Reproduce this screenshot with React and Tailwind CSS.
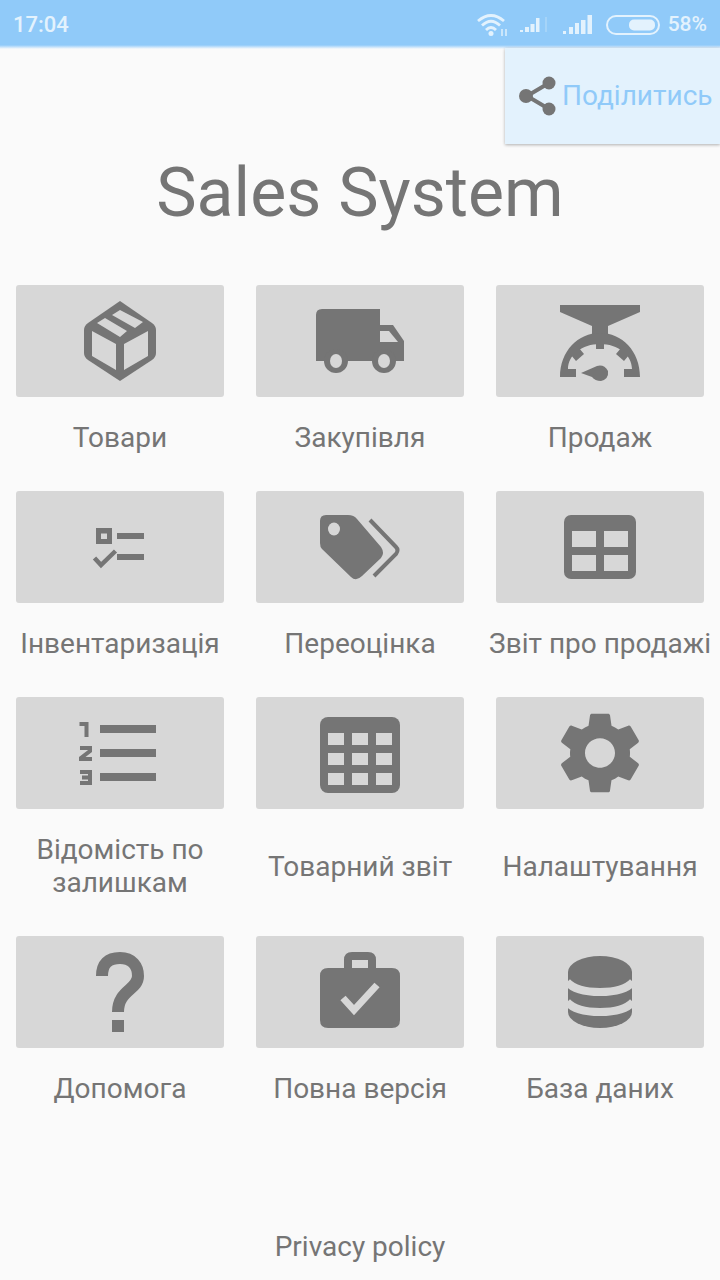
import React from "react";

const GRAY = "#757575";
const TILE = "#d7d7d7";

// all tile icons are drawn in tile coordinates (208 x 112)
function BoxIcon() {
	return (
		<>
			<path d="M104 16 L136 38 Q140 41 140 45 V68 Q140 72 136 75 L104 96 L72 75 Q68 72 68 68 V45 Q68 41 72 38 Z" fill={GRAY} />
			<path d="M76 46 L100 59 V85 L76 71 Z M132 46 L108 59 V85 L132 71 Z" fill={TILE} />
			<path d="M81 38 L89 33 L111 46 L104 52 Z M96 30 L104 25 L127 37 L119 43 Z" fill={TILE} />
		</>
	);
}

function TruckIcon() {
	return (
		<>
			<path d="M66 24 H124 V40 H137 L148 56 V76 H60 V30 Q60 24 66 24 Z" fill={GRAY} />
			<path d="M124 46 H133 L142 57 H124 Z" fill={TILE} />
			<ellipse cx="80" cy="76" rx="12" ry="12" fill={GRAY} />
			<ellipse cx="128" cy="76" rx="12" ry="12" fill={GRAY} />
			<ellipse cx="80" cy="76" rx="6" ry="7" fill={TILE} />
			<ellipse cx="128" cy="76" rx="6" ry="7" fill={TILE} />
		</>
	);
}

function ScaleIcon() {
	return (
		<>
			<path d="M64 20 H144 V27 L112 41 V50 H96 V41 L64 27 Z" fill={GRAY} />
			<path d="M64 92 C64 66 82 48 104 48 C126 48 144 66 144 92 H128 V84 H136 C136 70 122 59 104 59 C86 59 72 70 72 84 H80 V92 Z" fill={GRAY} />
			<rect x="100" y="52" width="8" height="12" fill={GRAY} />
			<path d="M75 70 L83 63 L88 69 L80 76 Z M133 70 L125 63 L120 69 L128 76 Z" fill={GRAY} />
			<path d="M85 88 L101 81 Q108 79 112 86 Q113 94 105 96 Q99 96 96 92 Z" fill={GRAY} />
		</>
	);
}

function ChecklistIcon() {
	return (
		<>
			<path fillRule="evenodd" d="M80 37 H96 V53 H80 Z M85 42.500 V48 H91 V42.500 Z" fill={GRAY} />
			<rect x="101" y="42" width="27" height="6" fill={GRAY} />
			<rect x="101" y="63" width="27" height="6" fill={GRAY} />
			<path d="M78.500 67 L85 74 L99.500 60" fill="none" stroke={GRAY} strokeWidth="4.500" />
		</>
	);
}

function TagIcon() {
	return (
		<>
			<path d="M70 24 H92 Q98 24 101 28 L125 56 Q129 62 125 67 L106 85 Q100 91 95 86 L66 58 Q64 56 64 52 V30 Q64 24 70 24 Z" fill={GRAY} />
			<ellipse cx="78" cy="38" rx="6" ry="6.500" fill={TILE} />
			<path d="M114 29 L140 56 Q143 59 140 63 L118 85" fill="none" stroke={GRAY} strokeWidth="4" />
		</>
	);
}

function TableIcon() {
	return (
		<>
			<rect x="68" y="24" width="72" height="64" rx="7" fill={GRAY} />
			<path d="M76 40 H100 V56 H76 Z M108 40 H132 V56 H108 Z M76 64 H100 V80 H76 Z M108 64 H132 V80 H108 Z" fill={TILE} />
		</>
	);
}

function NumberedIcon() {
	return (
		<>
			<path d="M84 28 H140 V36 H84 Z M84 52 H140 V60 H84 Z M84 76 H140 V84 H84 Z" fill={GRAY} />
			<path d="M63.500 27 H70.500 V40" fill="none" stroke={GRAY} strokeWidth="4" />
			<path d="M64 51 H74 V54 L65 61 V62 H76" fill="none" stroke={GRAY} strokeWidth="4" />
			<path d="M64 75 H74 V86 H64 M66 80.500 H74" fill="none" stroke={GRAY} strokeWidth="4" />
		</>
	);
}

function CalendarIcon() {
	return (
		<>
			<rect x="64" y="20" width="80" height="76" rx="8" fill={GRAY} />
			<path d="M72 36 H88 V48 H72 Z M96 36 H112 V48 H96 Z M120 36 H136 V48 H120 Z M72 56 H88 V68 H72 Z M96 56 H112 V68 H96 Z M120 56 H136 V68 H120 Z M72 76 H88 V88 H72 Z M96 76 H112 V88 H96 Z M120 76 H136 V88 H120 Z" fill={TILE} />
		</>
	);
}

function GearIcon() {
	return (
		<path
			transform="translate(104 56) scale(4.170 4.100) translate(-12 -12)"
			fill={GRAY}
			d="M19.14 12.94c.04-.3.06-.61.06-.94 0-.32-.02-.64-.07-.94l2.03-1.58c.18-.14.23-.41.12-.61l-1.92-3.32c-.12-.22-.37-.29-.59-.22l-2.39.96c-.5-.38-1.03-.7-1.62-.94l-.36-2.54c-.04-.24-.24-.41-.48-.41h-3.84c-.24 0-.43.17-.47.41l-.36 2.54c-.59.24-1.13.57-1.62.94l-2.39-.96c-.22-.08-.47 0-.59.22L2.74 8.87c-.12.21-.08.47.12.61l2.03 1.58c-.05.3-.09.63-.09.94s.02.64.07.94l-2.03 1.58c-.18.14-.23.41-.12.61l1.92 3.32c.12.22.37.29.59.22l2.39-.96c.5.38 1.03.7 1.62.94l.36 2.54c.05.24.24.41.48.41h3.84c.24 0 .44-.17.47-.41l.36-2.54c.59-.24 1.13-.56 1.62-.94l2.39.96c.22.08.47 0 .59-.22l1.92-3.32c.12-.22.07-.47-.12-.61l-2.01-1.58zM12 15.6c-1.98 0-3.6-1.62-3.6-3.6s1.62-3.6 3.6-3.6 3.6 1.62 3.6 3.6-1.62 3.6-3.6 3.6z"
		/>
	);
}

function HelpIcon() {
	return (
		<>
			<path d="M86 40 C86 28 92 22 104 22 C116 22 122 30 122 40 C122 54 102 54 102 76" fill="none" stroke={GRAY} strokeWidth="12" />
			<rect x="96" y="84" width="12" height="12" fill={GRAY} />
		</>
	);
}

function CaseIcon() {
	return (
		<>
			<path fillRule="evenodd" d="M96 16 H112 Q120 16 120 24 V32 H136 Q144 32 144 40 V84 Q144 92 136 92 H72 Q64 92 64 84 V40 Q64 32 72 32 H88 V24 Q88 16 96 16 Z M96 24 V32 H112 V24 Z" fill={GRAY} />
			<path d="M87 62 L98 74 L121 49" fill="none" stroke={TILE} strokeWidth="7" />
		</>
	);
}

function DbIcon() {
	return (
		<>
			<path d="M72 36 A32 16 0 0 1 136 36 V76 A32 16 0 0 1 72 76 Z" fill={GRAY} />
			<path d="M71 46 Q80 56 104 56 Q128 56 137 46 M71 66 Q80 76 104 76 Q128 76 137 66" fill="none" stroke={TILE} strokeWidth="8" />
		</>
	);
}

const items = [
	{ label: "Товари", icon: BoxIcon },
	{ label: "Закупівля", icon: TruckIcon },
	{ label: "Продаж", icon: ScaleIcon },
	{ label: "Інвентаризація", icon: ChecklistIcon },
	{ label: "Переоцінка", icon: TagIcon },
	{ label: "Звіт про продажі", icon: TableIcon },
	{ label: "Відомість по залишкам", icon: NumberedIcon },
	{ label: "Товарний звіт", icon: CalendarIcon },
	{ label: "Налаштування", icon: GearIcon },
	{ label: "Допомога", icon: HelpIcon },
	{ label: "Повна версія", icon: CaseIcon },
	{ label: "База даних", icon: DbIcon },
];

function StatusIcons() {
	const c = "#e3f2fd";
	return (
		<div className="flex items-center">
			<svg width="32" height="24" viewBox="0 0 32 24" className="mr-[12px]">
				<path d="M2 8 Q15 -3 28 8 M6 12.500 Q15 4 24 12.500 M10 17 Q15 12 20 17" fill="none" stroke={c} strokeWidth="2.800" />
				<circle cx="15" cy="20.500" r="2.500" fill={c} />
				<path d="M26 16 V23 M30 16 V23" stroke={c} strokeWidth="2" opacity="0.7" />
			</svg>
			<svg width="30" height="16" viewBox="0 0 30 16" className="mr-[13px]">
				<path d="M0 13 H3 V15 H0 Z M5 10 H9 V15 H5 Z M10.500 7 H14.500 V15 H10.500 Z M16 1 H19.500 V15 H16 Z" fill={c} />
				<path d="M25 0 H27 V15 H25 Z" fill={c} opacity="0.25" />
			</svg>
			<svg width="30" height="20" viewBox="0 0 30 20" className="mr-[13px]">
				<path d="M0 16 H3 V19 H0 Z M6 12 H10 V19 H6 Z M12 8 H16 V19 H12 Z M18 5 H22.500 V19 H18 Z M24.500 0 H29 V19 H24.500 Z" fill={c} />
			</svg>
			<svg width="54" height="20" viewBox="0 0 54 20" className="mr-[8px]">
				<rect x="1" y="1" width="52" height="18" rx="9" fill="none" stroke={c} strokeWidth="2" />
				<rect x="23" y="4.500" width="26" height="11" rx="5" fill={c} />
			</svg>
			<span className="text-[21px] font-medium text-[#e3f2fd]">58%</span>
		</div>
	);
}

export default function App() {
	return (
		<div className="flex h-[1280px] w-[720px] flex-col bg-[#fafafa] font-[Roboto,sans-serif] text-[#757575]">
			<div className="flex h-[45px] items-center justify-between bg-[#90caf9] pl-[13px] pr-[13px] pt-[4px]">
				<span className="text-[22px] font-medium text-[#e3f2fd]">17:04</span>
				<StatusIcons />
			</div>
			<div className="h-[4px] bg-gradient-to-b from-[#90caf9] to-[#fafafa]" />
			<div className="flex justify-end">
				<button className="-mt-[1px] flex h-[96px] w-[215px] items-center bg-[#e3f2fd] pl-[14px] shadow-[0_1px_3px_rgba(0,0,0,0.3)]">
					<svg width="38" height="40" viewBox="0 0 38 40" className="mr-[5px] shrink-0">
						<path d="M30 7 L8 20 L30 33" fill="none" stroke={GRAY} strokeWidth="4" />
						<circle cx="30" cy="7" r="6.500" fill={GRAY} />
						<circle cx="7" cy="20" r="7" fill={GRAY} />
						<circle cx="30" cy="33" r="6.500" fill={GRAY} />
					</svg>
					<span className="text-[28px] text-[#90caf9]">Поділитись</span>
				</button>
			</div>
			<h1 className="flex h-[141px] items-center justify-center pb-[44px] text-[68px] font-normal">Sales System</h1>
			<div className="grid grid-cols-3 gap-x-[32px] gap-y-[13px] px-[16px]">
				{items.map((item) => {
					const Icon = item.icon;
					return (
						<div key={item.label} className="flex flex-col">
							<div className="h-[112px] rounded-[3px] bg-[#d7d7d7]">
								<svg viewBox="0 0 208 112" className="h-full w-full">
									<Icon />
								</svg>
							</div>
							<div className="-mx-[8px] flex flex-1 items-center justify-center py-[24px] text-center text-[28px] leading-[33px]">
								{item.label}
							</div>
						</div>
					);
				})}
			</div>
			<div className="mt-auto pb-[17px] text-center text-[28px] leading-[33px]">Privacy policy</div>
		</div>
	);
}
